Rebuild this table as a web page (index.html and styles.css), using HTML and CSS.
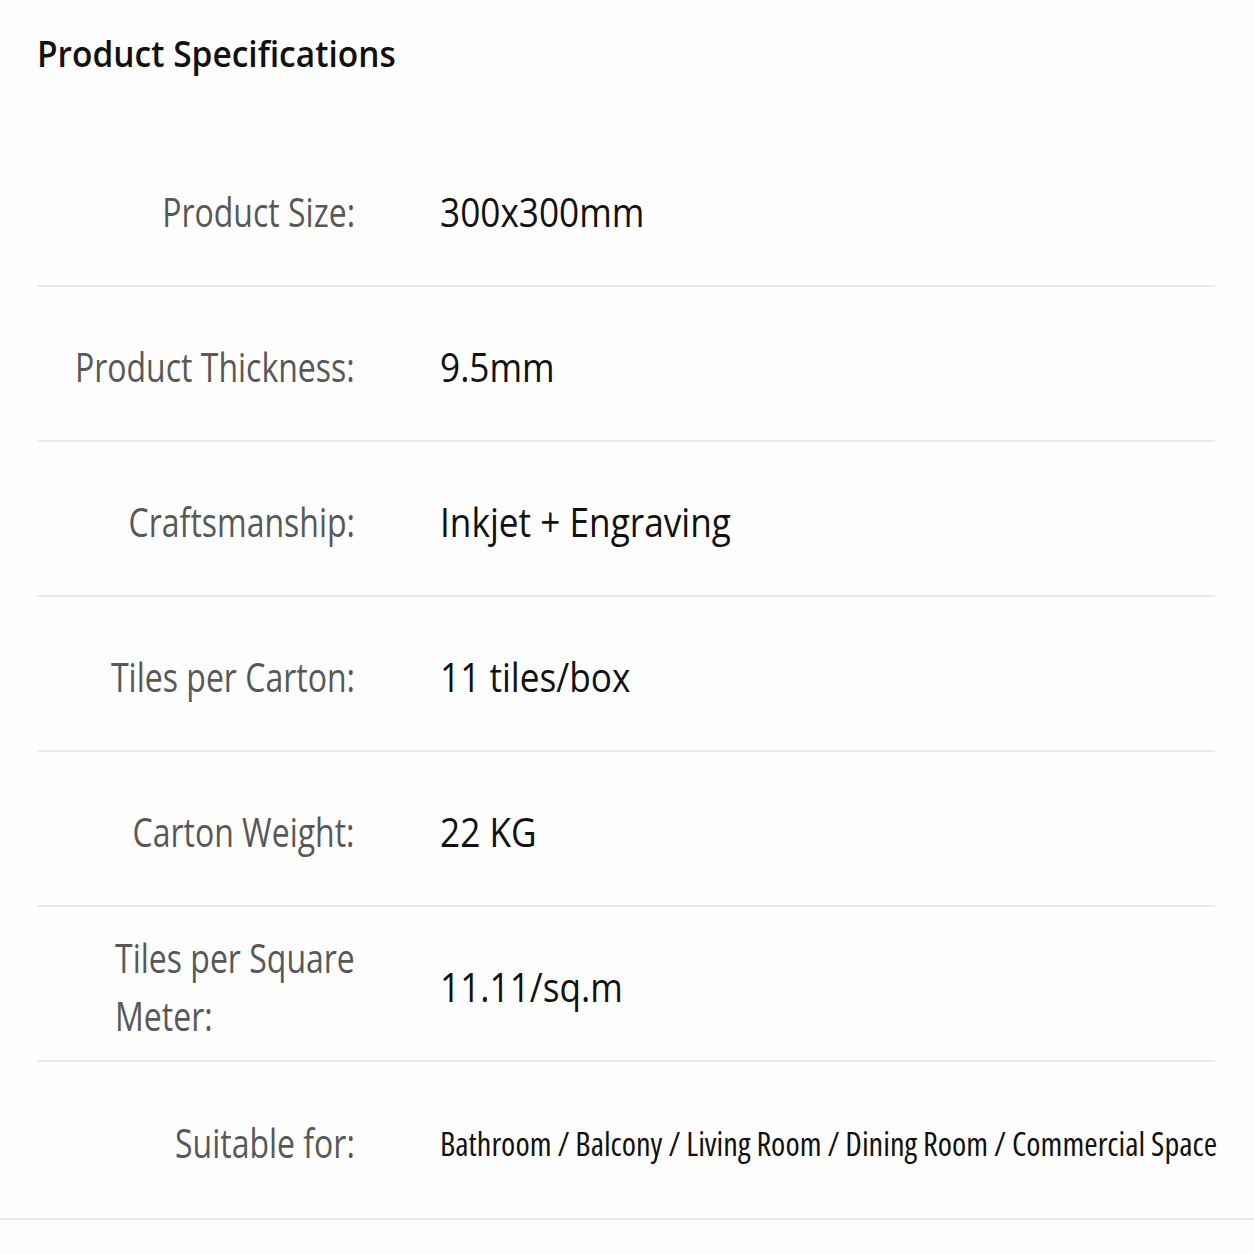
FILE: index.html
```html
<!DOCTYPE html>
<html lang="en">
<head>
  <meta charset="UTF-8">
  <meta name="viewport" content="width=device-width, initial-scale=1.0">
  <title>Product Specifications</title>
  <link rel="stylesheet" href="styles.css">
</head>
<body>
  <h1 class="spec-title">Product Specifications</h1>

  <div class="spec-table">
    <div class="spec-row">
      <div class="spec-label"><span>Product Size:</span></div>
      <div class="spec-value">300x300mm</div>
    </div>
    <div class="spec-row">
      <div class="spec-label"><span>Product Thickness:</span></div>
      <div class="spec-value">9.5mm</div>
    </div>
    <div class="spec-row">
      <div class="spec-label"><span>Craftsmanship:</span></div>
      <div class="spec-value">Inkjet + Engraving</div>
    </div>
    <div class="spec-row">
      <div class="spec-label"><span>Tiles per Carton:</span></div>
      <div class="spec-value">11 tiles/box</div>
    </div>
    <div class="spec-row">
      <div class="spec-label"><span>Carton Weight:</span></div>
      <div class="spec-value">22 KG</div>
    </div>
    <div class="spec-row">
      <div class="spec-label narrow"><span>Tiles per Square Meter:</span></div>
      <div class="spec-value">11.11/sq.m</div>
    </div>
    <div class="spec-row last">
      <div class="spec-label"><span>Suitable for:</span></div>
      <div class="spec-value small">Bathroom / Balcony / Living Room / Dining Room / Commercial Space</div>
    </div>
  </div>
</body>
</html>
```

FILE: styles.css
```css
body {
  font-family: "Open Sans", "Noto Sans", sans-serif;
  background-color: #fefefe;
  color: #111;
  margin: 0;
  padding: 0;
}

.spec-title {
  font-size: 36px;
  font-weight: 600;
  line-height: 50px;
  margin: 29px 0 0 37px;
  color: #111;
  transform: scaleX(0.93);
  transform-origin: left center;
}

.spec-table {
  margin-top: 53px;
  border-bottom: 2px solid #e9e9e9;
}

.spec-row {
  display: grid;
  grid-template-columns: 318px 1fr;
  column-gap: 85px;
  align-items: center;
  height: 153px;
  margin: 0 39px 0 37px;
  border-bottom: 2px solid #e9e9e9;
}

.spec-row.last {
  height: 156px;
  border-bottom: none;
}

/* labels are set in a narrow face: squeeze the regular cut */
.spec-label {
  display: flex;
  justify-content: flex-end;
  font-size: 40px;
  font-weight: 400;
  line-height: 58px;
  color: #585858;
  padding-top: 6px;
}

.spec-label span {
  white-space: nowrap;
  transform: scaleX(0.8);
  transform-origin: right center;
}

.spec-label.narrow span {
  white-space: normal;
  max-width: 300px;
}

.spec-value {
  font-size: 40px;
  font-weight: 400;
  line-height: 58px;
  color: #111;
  padding-top: 6px;
  white-space: nowrap;
  transform: scaleX(0.88);
  transform-origin: left center;
}

.spec-value.small {
  font-size: 32.4px;
  font-stretch: 75%;
  transform: none;
}
```
